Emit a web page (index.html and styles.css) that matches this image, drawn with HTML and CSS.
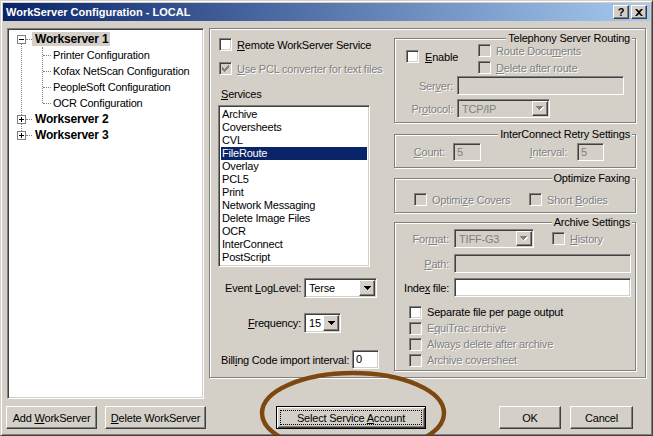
FILE: index.html
```html
<!DOCTYPE html>
<html lang="en">
<head>
  <meta charset="UTF-8" />
  <title>WorkServer Configuration - LOCAL</title>
  <link rel="stylesheet" href="styles.css">
</head>
<body>
<div class="window">
  <div class="titlebar">
    <span class="title">WorkServer Configuration - LOCAL</span>
    <span class="capbtn raised">?</span>
    <span class="capbtn raised">
      <svg width="8" height="7" viewBox="0 0 8 7"><path d="M0 0h2l2 2 2-2h2L5 3.5 8 7H6L4 5 2 7H0l3-3.5z"/></svg>
    </span>
  </div>

  <div class="main">
    <!-- workserver tree -->
    <div class="tree sunk">
      <ul class="nodes">
        <li>
          <div class="node"><span class="exp minus"></span><span class="dash"></span><span class="name sel">Workserver 1</span></div>
          <ul class="kids">
            <li><span class="dash"></span><span class="item">Printer Configuration</span></li>
            <li><span class="dash"></span><span class="item">Kofax NetScan Configuration</span></li>
            <li><span class="dash"></span><span class="item">PeopleSoft Configuration</span></li>
            <li><span class="dash"></span><span class="item">OCR Configuration</span></li>
          </ul>
        </li>
        <li><div class="node"><span class="exp plus"></span><span class="dash"></span><span class="name">Workserver 2</span></div></li>
        <li><div class="node"><span class="exp plus"></span><span class="dash"></span><span class="name">Workserver 3</span></div></li>
      </ul>
    </div>

    <div class="panel etched">
      <div class="leftcol">
        <div class="chk"><span class="cb sunk"></span><span><u>R</u>emote WorkServer Service</span></div>
        <div class="chk dis pcl">
          <span class="cb sunk off"><svg width="9" height="9" viewBox="0 0 9 9"><path d="M7 1h1v1H7zM6 2h2v1H6zM1 3h1v1H1zM5 3h3v1H5zM1 4h2v1H1zM4 4h3v1H4zM1 5h5v1H1zM2 6h3v1H2zM3 7h1v1H3z"/></svg></span>
          <span><u>U</u>se PCL converter for text files</span>
        </div>
        <div class="svc-label"><u>S</u>ervices</div>
        <ul class="list sunk">
          <li>Archive</li>
          <li>Coversheets</li>
          <li>CVL</li>
          <li class="sel">FileRoute</li>
          <li>Overlay</li>
          <li>PCL5</li>
          <li>Print</li>
          <li>Network Messaging</li>
          <li>Delete Image Files</li>
          <li>OCR</li>
          <li>InterConnect</li>
          <li>PostScript</li>
        </ul>
        <div class="frow loglevel">
          <span class="lbl lbl-opt">Event <u>L</u>ogLevel:</span>
          <span class="combo sunk w-log"><span class="val">Terse</span><span class="drop raised"><svg width="7" height="4" viewBox="0 0 7 4"><path d="M0 0h7v1H0zM1 1h5v1H1zM2 2h3v1H2zM3 3h1v1H3z"/></svg></span></span>
        </div>
        <div class="frow freq">
          <span class="lbl lbl-opt"><u>F</u>requency:</span>
          <span class="combo sunk w-freq"><span class="val">15</span><span class="drop raised"><svg width="7" height="4" viewBox="0 0 7 4"><path d="M0 0h7v1H0zM1 1h5v1H1zM2 2h3v1H2zM3 3h1v1H3z"/></svg></span></span>
        </div>
        <div class="frow billing">
          <span class="lbl">Bill<u>i</u>ng Code import interval:</span>
          <span class="edit sunk w-bill">0</span>
        </div>
      </div>

      <div class="rightcol">
        <div class="group etched tel">
          <span class="group-title">Telephony Server Routing</span>
          <div class="tel-top">
            <div class="chk enable"><span class="cb sunk"></span><span><u>E</u>nable</span></div>
            <div class="tel-opts">
              <div class="chk dis"><span class="cb sunk off"></span><span>Route Docu<u>m</u>ents</span></div>
              <div class="chk dis"><span class="cb sunk off"></span><span><u>D</u>elete after route</span></div>
            </div>
          </div>
          <div class="frow server">
            <span class="lbl dis lbl-tel">Ser<u>v</u>er:</span>
            <span class="edit sunk off w-server"></span>
          </div>
          <div class="frow protocol">
            <span class="lbl dis lbl-tel">Pr<u>o</u>tocol:</span>
            <span class="combo sunk off w-proto"><span class="val">TCP/IP</span><span class="drop raised"><svg width="8" height="5" viewBox="0 0 8 5"><path fill="#fff" d="M1 1h7v1H1zM2 2h5v1H2zM3 3h3v1H3zM4 4h1v1H4z"/><path fill="#808080" d="M0 0h7v1H0zM1 1h5v1H1zM2 2h3v1H2zM3 3h1v1H3z"/></svg></span></span>
          </div>
        </div>

        <div class="group etched retry">
          <span class="group-title">InterConnect Retry Settings</span>
          <div class="frow">
            <span class="lbl dis lbl-count"><u>C</u>ount:</span>
            <span class="edit sunk off w-count">5</span>
            <span class="lbl dis lbl-interval"><u>I</u>nterval:</span>
            <span class="edit sunk off w-interval">5</span>
          </div>
        </div>

        <div class="group etched faxing">
          <span class="group-title">Optimize Faxing</span>
          <div class="chk dis covers"><span class="cb sunk off"></span><span>Optimi<u>z</u>e Covers</span></div>
          <div class="chk dis"><span class="cb sunk off"></span><span>Short <u>B</u>odies</span></div>
        </div>

        <div class="group etched archive">
          <span class="group-title">Archive Settings</span>
          <div class="frow">
            <span class="lbl dis lbl-arch">For<u>m</u>at:</span>
            <span class="combo sunk off w-format"><span class="val">TIFF-G3</span><span class="drop raised"><svg width="8" height="5" viewBox="0 0 8 5"><path fill="#fff" d="M1 1h7v1H1zM2 2h5v1H2zM3 3h3v1H3zM4 4h1v1H4z"/><path fill="#808080" d="M0 0h7v1H0zM1 1h5v1H1zM2 2h3v1H2zM3 3h1v1H3z"/></svg></span></span>
            <div class="chk dis history"><span class="cb sunk off"></span><span><u>H</u>istory</span></div>
          </div>
          <div class="frow path">
            <span class="lbl dis lbl-arch"><u>P</u>ath:</span>
            <span class="edit sunk off w-path"></span>
          </div>
          <div class="frow index">
            <span class="lbl lbl-arch">Inde<u>x</u> file:</span>
            <span class="edit sunk w-path"></span>
          </div>
          <div class="arch-checks">
            <div class="chk"><span class="cb sunk"></span><span>Separate file per page output</span></div>
            <div class="chk dis"><span class="cb sunk off"></span><span>E<u>q</u>uiTrac archive</span></div>
            <div class="chk dis"><span class="cb sunk off"></span><span>Alwa<u>y</u>s delete after archive</span></div>
            <div class="chk dis"><span class="cb sunk off"></span><span>Archive coversheet</span></div>
          </div>
        </div>
      </div>
    </div>

    <div class="buttons">
      <button class="btn raised btn-add">Add <u>W</u>orkServer</button>
      <button class="btn raised btn-del"><u>D</u>elete WorkServer</button>
      <button class="btn btn-acct"><span class="focus"><span>Select Service <u>A</u>ccount</span></span></button>
      <button class="btn raised btn-ok">OK</button>
      <button class="btn raised btn-cancel">Cancel</button>
    </div>
  </div>

  <!-- hand drawn mark around the account button -->
  <svg class="mark" width="651" height="434" viewBox="0 0 651 434">
    <ellipse cx="352" cy="412" rx="91" ry="40" fill="none" stroke="#7d4710" stroke-width="4.5"/>
  </svg>
</div>
</body>
</html>
```

FILE: styles.css
```css
* {
  box-sizing: border-box;
}

body {
  margin: 0;
  font-family: "Liberation Sans", Arial, sans-serif;
  font-size: 11px;
  letter-spacing: -0.2px;
  color: #000;
  background: #d4d0c8;
}

ul {
  list-style: none;
  margin: 0;
  padding: 0;
}

/* classic 3d edges */
.raised {
  border: 1px solid;
  border-color: #fff #404040 #404040 #fff;
  box-shadow: inset -1px -1px #808080, inset 1px 1px #d4d0c8;
  background: #d4d0c8;
}

.sunk {
  border: 1px solid;
  border-color: #808080 #fff #fff #808080;
  box-shadow: inset 1px 1px #404040, inset -1px -1px #d4d0c8;
  background: #fff;
}

.etched {
  border: 1px solid #808080;
  box-shadow: inset 1px 1px #fff, 1px 1px #fff;
}

.dis {
  color: #808080;
  text-shadow: 1px 1px 0 #fff;
}

.window {
  position: relative;
  width: 653px;
  height: 436px;
  overflow: hidden;
  padding: 2px;
  border: 1px solid;
  border-color: #d4d0c8 #404040 #404040 #d4d0c8;
  box-shadow: inset 1px 1px #fff, inset -1px -1px #808080;
  background: #d4d0c8;
}

.titlebar {
  display: flex;
  align-items: center;
  height: 18px;
  padding: 0 3px;
  background: linear-gradient(to right, #0a246a, #a6caf0);
}

.title {
  flex: 1;
  color: #fff;
  font-weight: bold;
  letter-spacing: 0;
}

.capbtn {
  width: 16px;
  height: 14px;
  display: flex;
  align-items: center;
  justify-content: center;
  font-weight: bold;
  letter-spacing: 0;
}

.capbtn + .capbtn {
  margin-left: 2px;
}

.main {
  display: grid;
  grid-template-columns: 197px 437px;
  column-gap: 5px;
  align-items: start;
  padding: 7px 0 0 4px;
}

/* tree */
.tree {
  height: 371px;
  padding: 2px 0 0 1px;
}

.nodes {
  position: relative;
}

.nodes::before {
  content: "";
  position: absolute;
  left: 12px;
  top: 13px;
  height: 87px;
  border-left: 1px dotted #808080;
}

.node {
  display: flex;
  align-items: center;
  height: 16px;
  padding-left: 8px;
}

.exp {
  position: relative;
  z-index: 1;
  width: 9px;
  height: 9px;
  border: 1px solid #808080;
  background: #fff;
}

.exp::before,
.plus::after {
  content: "";
  position: absolute;
  background: #000;
}

.exp::before {
  left: 1px;
  top: 3px;
  width: 5px;
  height: 1px;
}

.plus::after {
  left: 3px;
  top: 1px;
  width: 1px;
  height: 5px;
}

.dash {
  width: 6px;
  border-top: 1px dotted #808080;
}

.name {
  padding: 0 2px 0 3px;
  line-height: 14px;
  font-size: 12px;
  font-weight: bold;
}

.name.sel {
  background: #d4d0c8;
}

.kids {
  position: relative;
}

.kids::before {
  content: "";
  position: absolute;
  left: 33px;
  top: 0;
  height: 56px;
  border-left: 1px dotted #808080;
}

.kids li {
  display: flex;
  align-items: center;
  height: 16px;
  padding-left: 34px;
}

.kids .dash {
  width: 8px;
}

.item {
  padding: 0 2px;
  line-height: 14px;
}

/* right panel */
.panel {
  height: 350px;
  display: flex;
  padding: 9px 0 0 9px;
}

.leftcol {
  width: 175px;
  display: flex;
  flex-direction: column;
  align-items: flex-start;
}

.chk {
  display: flex;
  align-items: center;
  gap: 5px;
  height: 13px;
  white-space: nowrap;
}

.cb {
  flex: none;
  width: 13px;
  height: 13px;
  display: flex;
  align-items: center;
  justify-content: center;
}

.cb.off {
  background: #d4d0c8;
}

.cb svg {
  fill: #808080;
}

.pcl {
  margin-top: 11px;
}

.svc-label {
  margin: 13px 0 0 2px;
  line-height: 13px;
}

.list {
  width: 152px;
  height: 162px;
  margin: 4px 0 0 -1px;
  padding: 2px 2px 0;
}

.list li {
  height: 13px;
  line-height: 13px;
  padding-left: 1px;
}

.list li.sel {
  background: #0a246a;
  color: #fff;
}

.frow {
  display: flex;
  align-items: center;
}

.lbl {
  flex: none;
  white-space: nowrap;
}

.lbl-opt {
  width: 82px;
  margin-right: 3px;
  text-align: right;
}

.loglevel {
  margin-top: 11px;
}

.freq {
  margin-top: 15px;
}

.billing {
  margin-top: 17px;
}

.billing .lbl {
  margin-left: 2px;
  margin-right: 3px;
}

.edit {
  height: 19px;
  padding-left: 3px;
  line-height: 17px;
}

.edit.off,
.combo.off {
  background: #d4d0c8;
  color: #808080;
}

.combo {
  display: flex;
  align-items: center;
  height: 20px;
  padding: 1px 1px 1px 4px;
}

.combo .val {
  flex: 1;
  white-space: nowrap;
  overflow: hidden;
}

.drop {
  flex: none;
  align-self: stretch;
  width: 16px;
  display: flex;
  align-items: center;
  justify-content: center;
}

.w-log { width: 73px; }
.w-freq { width: 37px; }
.w-bill { width: 27px; }
.w-server { width: 167px; }
.w-proto { width: 93px; height: 19px; }
.w-count { width: 28px; height: 18px; line-height: 16px; }
.w-interval { width: 27px; height: 18px; line-height: 16px; }
.w-format { width: 80px; height: 19px; }
.w-path { width: 177px; }

/* group boxes */
.rightcol {
  width: 242px;
  display: flex;
  flex-direction: column;
}

.group {
  position: relative;
}

.group-title {
  position: absolute;
  top: -7px;
  right: 3px;
  padding: 0 2px;
  line-height: 13px;
  background: #d4d0c8;
}

.tel {
  height: 85px;
  padding-top: 5px;
}

.tel-top {
  display: flex;
  height: 30px;
}

.enable {
  width: 72px;
  margin: 6px 0 0 11px;
  gap: 6px;
}

.tel-opts {
  display: flex;
  flex-direction: column;
  gap: 4px;
}

.lbl-tel {
  width: 58px;
  margin-right: 4px;
  text-align: right;
}

.server {
  margin-top: 2px;
}

.protocol {
  margin-top: 4px;
}

.retry {
  height: 34px;
  margin-top: 11px;
  padding-top: 8px;
}

.lbl-count {
  width: 50px;
  margin-right: 8px;
  text-align: right;
}

.lbl-interval {
  width: 86px;
  margin-right: 10px;
  text-align: right;
}

.faxing {
  display: flex;
  height: 35px;
  margin-top: 10px;
  padding: 14px 0 0 19px;
}

.covers {
  width: 115px;
}

.archive {
  height: 149px;
  margin-top: 9px;
  padding-top: 6px;
}

.lbl-arch {
  width: 54px;
  margin-right: 5px;
  text-align: right;
}

.history {
  margin-left: 18px;
}

.path {
  margin-top: 6px;
}

.index {
  margin-top: 5px;
}

.arch-checks {
  display: flex;
  flex-direction: column;
  margin-top: 7px;
  padding-left: 14px;
}

.arch-checks .chk {
  height: 16px;
}

/* bottom buttons */
.buttons {
  grid-column: 1 / -1;
  display: flex;
  margin: 7px 0 0 -1px;
}

.btn {
  height: 23px;
  padding: 0;
  font: inherit;
  letter-spacing: inherit;
  color: #000;
}

.btn-add { width: 91px; }
.btn-del { width: 101px; margin-left: 8px; }
.btn-ok { width: 62px; margin-left: 73px; }
.btn-cancel { width: 63px; margin-left: 9px; }

.btn-acct {
  display: flex;
  width: 150px;
  margin-left: 70px;
  padding: 3px;
  border: 1px solid #000;
  background: #d4d0c8;
  box-shadow: inset 1px 1px #fff, inset -1px -1px #404040, inset 2px 2px #d4d0c8, inset -2px -2px #808080;
}

.focus {
  flex: 1;
  display: flex;
  align-items: center;
  justify-content: center;
  border: 1px dotted #000;
}

.mark {
  position: absolute;
  left: 0;
  top: 0;
  pointer-events: none;
}
```
